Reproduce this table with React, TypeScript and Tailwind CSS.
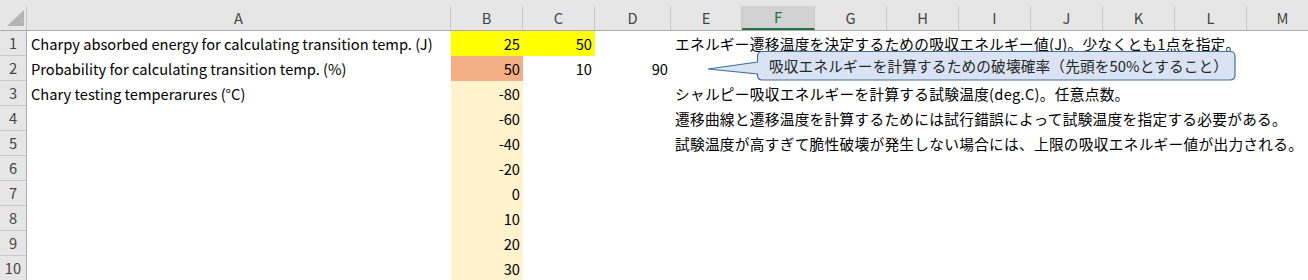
import type { ReactNode } from "react";

type Col = { key: string; width: string; selected?: boolean };

const COLUMNS: Col[] = [
  { key: "A", width: "w-[424px]" },
  { key: "B", width: "w-[72px]" },
  { key: "C", width: "w-[72px]" },
  { key: "D", width: "w-[76px]" },
  { key: "E", width: "w-[71px]" },
  { key: "F", width: "w-[73px]", selected: true },
  { key: "G", width: "w-[72px]" },
  { key: "H", width: "w-[72px]" },
  { key: "I", width: "w-[72px]" },
  { key: "J", width: "w-[72px]" },
  { key: "K", width: "w-[72px]" },
  { key: "L", width: "w-[72px]" },
  { key: "M", width: "w-[72px]" },
];

type Cell = { text?: string; fill?: string; align?: "left" | "right"; jp?: boolean };
type Row = { n: number; cells: Record<string, Cell> };

const ROWS: Row[] = [
  {
    n: 1,
    cells: {
      A: { text: "Charpy absorbed energy for calculating transition temp. (J)" },
      B: { text: "25", fill: "bg-[#ffff00]", align: "right" },
      C: { text: "50", fill: "bg-[#ffff00]", align: "right" },
      E: { text: "エネルギー遷移温度を決定するための吸収エネルギー値(J)。少なくとも1点を指定。", jp: true },
    },
  },
  {
    n: 2,
    cells: {
      A: { text: "Probability for calculating transition temp. (%)" },
      B: { text: "50", fill: "bg-[#f4b084]", align: "right" },
      C: { text: "10", align: "right" },
      D: { text: "90", align: "right" },
    },
  },
  {
    n: 3,
    cells: {
      A: { text: "Chary testing temperarures (°C)" },
      B: { text: "-80", fill: "bg-[#fff2cc]", align: "right" },
      E: { text: "シャルピー吸収エネルギーを計算する試験温度(deg.C)。任意点数。", jp: true },
    },
  },
  {
    n: 4,
    cells: {
      B: { text: "-60", fill: "bg-[#fff2cc]", align: "right" },
      E: { text: "遷移曲線と遷移温度を計算するためには試行錯誤によって試験温度を指定する必要がある。", jp: true },
    },
  },
  {
    n: 5,
    cells: {
      B: { text: "-40", fill: "bg-[#fff2cc]", align: "right" },
      E: { text: "試験温度が高すぎて脆性破壊が発生しない場合には、上限の吸収エネルギー値が出力される。", jp: true },
    },
  },
  { n: 6, cells: { B: { text: "-20", fill: "bg-[#fff2cc]", align: "right" } } },
  { n: 7, cells: { B: { text: "0", fill: "bg-[#fff2cc]", align: "right" } } },
  { n: 8, cells: { B: { text: "10", fill: "bg-[#fff2cc]", align: "right" } } },
  { n: 9, cells: { B: { text: "20", fill: "bg-[#fff2cc]", align: "right" } } },
  { n: 10, cells: { B: { text: "30", fill: "bg-[#fff2cc]", align: "right" } } },
];

function ColumnHeader({ col }: { col: Col }) {
  return (
    <div
      className={`${col.width} shrink-0 h-[24px] flex items-center justify-center border-r border-[#c8c8c8] ${
        col.selected ? "bg-[#d2d2d2] text-[#217346] border-b-2 border-b-[#217346]" : "text-[#444]"
      }`}
    >
      {col.key}
    </div>
  );
}

function DataCell({ col, cell }: { col: Col; cell?: Cell }) {
  let content: ReactNode = null;
  if (cell?.text) {
    content =
      cell.align === "right" ? (
        <span className="ml-auto pr-[3px]">{cell.text}</span>
      ) : (
        <span className={`pl-[4px] whitespace-nowrap ${cell.jp ? "tracking-[0.3px]" : ""}`}>{cell.text}</span>
      );
  }
  return (
    <div className={`${col.width} shrink-0 h-full flex items-center overflow-visible ${cell?.fill ?? ""}`}>
      {content}
    </div>
  );
}

function Callout() {
  return (
    <div className="absolute left-[700px] top-[48px] w-[540px] h-[36px]">
      <svg width="540" height="36" className="absolute inset-0">
        <path
          d="M62 3.5 H530 Q535 3.5 535 8.5 V27 Q535 32 530 32 H62 Q57.5 32 57.5 27 V26 L8 21 L57.5 14 V8.5 Q57.5 3.5 62 3.5 Z"
          fill="#dae3f3"
          stroke="#41719c"
          strokeWidth="1.2"
        />
      </svg>
      <span className="absolute left-[69px] top-[4px] h-[28px] flex items-center whitespace-nowrap tracking-[0.15px] text-[#262626]">
        吸収エネルギーを計算するための破壊確率（先頭を50%とすること）
      </span>
    </div>
  );
}

export default function App() {
  return (
    <div
      className="relative w-[1308px] h-[280px] overflow-hidden bg-white text-[14.67px] text-black"
      style={{ fontFamily: '"Noto Sans CJK JP", "Noto Sans", sans-serif' }}
    >
      <div className="flex h-[31px] bg-[#e6e6e6] border-b border-[#ababab] items-end">
        <div className="w-[27px] shrink-0 h-[24px] border-r border-[#c8c8c8] relative">
          <svg width="27" height="24" className="absolute inset-0">
            <polygon points="7,20 24,20 24,4" fill="#b4b4b4" />
          </svg>
        </div>
        {COLUMNS.map((col) => (
          <ColumnHeader key={col.key} col={col} />
        ))}
      </div>

      {ROWS.map((row) => (
        <div key={row.n} className="flex h-[25px]">
          <div className="w-[27px] shrink-0 h-full flex items-center justify-center bg-[#e6e6e6] border-r border-b border-r-[#ababab] border-b-[#c8c8c8] text-[#444]">
            {row.n}
          </div>
          {COLUMNS.map((col) => (
            <DataCell key={col.key} col={col} cell={row.cells[col.key]} />
          ))}
        </div>
      ))}

      <Callout />
    </div>
  );
}
